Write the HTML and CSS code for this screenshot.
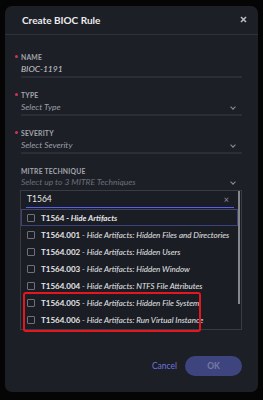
FILE: index.html
```html
<!DOCTYPE html>
<html lang="en">
<head>
  <meta charset="UTF-8">
  <meta name="viewport" content="width=device-width, initial-scale=1.0">
  <title>Create BIOC Rule</title>
  <link rel="stylesheet" href="styles.css">
</head>
<body>
  <div class="dialog">
    <div class="dialog-header">
      <h1>Create BIOC Rule</h1>
      <svg class="close" width="7" height="7" viewBox="0 0 7 7"><path d="M1 1L6 6M6 1L1 6" stroke="#b9bbc1" stroke-width="1.6"/></svg>
    </div>
    <div class="dialog-body">
      <div class="field">
        <label class="required">Name</label>
        <div class="value">BIOC-1191</div>
      </div>
      <div class="field">
        <label class="required">Type</label>
        <div class="value select">Select Type <span class="chevron"></span></div>
      </div>
      <div class="field">
        <label class="required">Severity</label>
        <div class="value select">Select Severity <span class="chevron"></span></div>
      </div>
      <div class="field">
        <label>Mitre Technique</label>
        <div class="value select plain">Select up to 3 MITRE Techniques <span class="chevron"></span></div>
        <div class="dropdown">
          <div class="search">
            <span>T1564</span>
            <span class="clear">×</span>
          </div>
          <ul class="options">
            <li class="active"><span class="check"></span><span><b>T1564</b><i> - Hide Artifacts</i></span></li>
            <li><span class="check"></span><span><b>T1564.001</b><i> - Hide Artifacts: Hidden Files and Directories</i></span></li>
            <li><span class="check"></span><span><b>T1564.002</b><i> - Hide Artifacts: Hidden Users</i></span></li>
            <li><span class="check"></span><span><b>T1564.003</b><i> - Hide Artifacts: Hidden Window</i></span></li>
            <li><span class="check"></span><span><b>T1564.004</b><i> - Hide Artifacts: NTFS File Attributes</i></span></li>
            <li><span class="check"></span><span><b>T1564.005</b><i> - Hide Artifacts: Hidden File System</i></span></li>
            <li><span class="check"></span><span><b>T1564.006</b><i> - Hide Artifacts: Run Virtual Instance</i></span></li>
          </ul>
          <div class="scroll-thumb"></div>
          <div class="highlight"></div>
        </div>
      </div>
    </div>
    <div class="dialog-footer">
      <button class="link-button">Cancel</button>
      <button class="ok-button" disabled>OK</button>
    </div>
  </div>
</body>
</html>
```

FILE: styles.css
```css
body {
  margin: 0;
  background-color: #050506;
  font-family: Lato, "Open Sans", sans-serif;
}
.dialog {
  margin: 6px 5px 0;
  height: 386px;
  background-color: #1d1f27;
  border-radius: 7px;
  display: flex;
  flex-direction: column;
}
.dialog-header {
  height: 28px;
  padding: 0 11px 0 17px;
  display: flex;
  align-items: center;
  justify-content: space-between;
  border-bottom: 1px solid #30323a;
}
.dialog-header h1 {
  margin: 0;
  font-size: 10px;
  font-weight: 700;
  color: #ececee;
}
.close {
  margin-top: -1px;
}
.dialog-body {
  flex: 1;
  padding: 17px 16px 0 16px;
}
.field {
  margin-bottom: 12px;
}
.field label {
  display: block;
  height: 10px;
  line-height: 10px;
  font-size: 6.8px;
  font-weight: 700;
  letter-spacing: 0.2px;
  text-transform: uppercase;
  color: #a3a5ad;
}
.field label.required::before {
  content: "";
  display: inline-block;
  width: 3px;
  height: 3px;
  border-radius: 50%;
  background-color: #d3344b;
  margin-left: -6px;
  margin-right: 3px;
  vertical-align: 2px;
}
.value {
  margin-top: 1px;
  height: 12px;
  line-height: 12px;
  padding-bottom: 1px;
  font-size: 8.5px;
  font-style: italic;
  color: #c9cad0;
  border-bottom: 2px solid #2b2e36;
  display: flex;
  justify-content: space-between;
  align-items: center;
}
.select {
  color: #9c9ea6;
}
.plain {
  margin-top: 0;
  border-bottom: none;
  color: #6c6f78;
}
.chevron {
  width: 3px;
  height: 3px;
  border-right: 1px solid #8d9098;
  border-bottom: 1px solid #8d9098;
  transform: rotate(45deg);
  margin-right: 7px;
  margin-top: -1px;
}
.dropdown {
  position: relative;
  margin: 1px 0 0 -1px;
  height: 138px;
  border: 1px solid #3a3c44;
  background-color: #1b1d24;
}
.search {
  height: 16px;
  margin: 0 7px 0 5px;
  padding: 0 5px 0 1px;
  display: flex;
  align-items: center;
  justify-content: space-between;
  font-size: 8.5px;
  color: #e6e7ea;
  border-bottom: 1.5px solid #5a62e4;
}
.clear {
  font-size: 9px;
  color: #8d9098;
}
.options {
  list-style: none;
  margin: 1px 0 0;
  padding: 0;
}
.options li {
  height: 17px;
  margin-right: 3px;
  padding-left: 6px;
  display: flex;
  align-items: center;
  font-size: 8px;
  color: #e4e5e8;
  white-space: nowrap;
  box-sizing: border-box;
}
.options li.active {
  border: 1px solid #3d4278;
  padding-left: 5px;
}
.options b {
  font-weight: 700;
}
.options li.active i {
  font-weight: 700;
}
.check {
  width: 6px;
  height: 6px;
  border: 1px solid #6e717a;
  border-radius: 1px;
  margin-right: 6px;
}
.scroll-thumb {
  position: absolute;
  right: 1px;
  top: 0;
  width: 2px;
  height: 113px;
  background-color: #85878d;
}
.highlight {
  position: absolute;
  left: 2px;
  top: 101px;
  width: 174px;
  height: 36px;
  border: 2px solid #e5161d;
  border-radius: 3px;
}
.dialog-footer {
  padding: 0 16px 16px;
  display: flex;
  justify-content: flex-end;
  align-items: center;
  gap: 8px;
}
.link-button {
  background: none;
  border: none;
  font-family: inherit;
  font-size: 8.5px;
  color: #6e76da;
  padding: 0;
}
.ok-button {
  width: 57px;
  height: 20px;
  border: none;
  border-radius: 10px;
  background-color: #3e457e;
  color: #767ba5;
  font-family: inherit;
  font-size: 8.5px;
  font-weight: 700;
}
```
